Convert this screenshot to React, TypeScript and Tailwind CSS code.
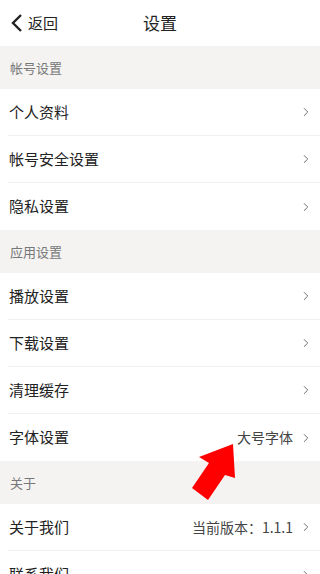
import { ChevronRight } from "lucide-react";

type Row = { label: string; value?: string };
type Group = { title: string; rows: Row[] };

const groups: Group[] = [
  {
    title: "帐号设置",
    rows: [{ label: "个人资料" }, { label: "帐号安全设置" }, { label: "隐私设置" }],
  },
  {
    title: "应用设置",
    rows: [
      { label: "播放设置" },
      { label: "下载设置" },
      { label: "清理缓存" },
      { label: "字体设置", value: "大号字体" },
    ],
  },
  {
    title: "关于",
    rows: [{ label: "关于我们", value: "当前版本：1.1.1" }, { label: "联系我们" }],
  },
];

export default function App() {
  return (
    <div
      className="relative h-[574px] w-[320px] overflow-hidden bg-white"
      style={{ fontFamily: '"Noto Sans CJK SC", "Noto Sans", sans-serif' }}
    >
      {/* 顶部导航 */}
      <div className="relative flex h-[46px] items-center justify-center bg-white">
        <div className="absolute left-[10px] top-0 flex h-full items-center text-[#222]">
          <svg width="14" height="20" viewBox="0 0 14 20" className="mr-[4px]">
            <path d="M11 2 L3 10 L11 18" fill="none" stroke="#222" strokeWidth="2.4" />
          </svg>
          <span className="text-[15px]">返回</span>
        </div>
        <span className="text-[17px] text-[#222]">设置</span>
      </div>

      {groups.map((g) => (
        <div key={g.title}>
          <div className="flex h-[43px] items-center bg-[#f4f3f2] pl-[10px] text-[13px] text-[#777]">
            {g.title}
          </div>
          {g.rows.map((r, i) => (
            <div key={r.label} className="pl-[8px]">
              <div
                className={
                  "flex h-[47px] items-center justify-between pl-[1px] pr-[7px] " +
                  (i < g.rows.length - 1 ? "border-b border-[#f0f0f0]" : "")
                }
              >
                <span className="text-[15px] text-[#222]">{r.label}</span>
                <div className="flex items-center">
                  {r.value && <span className="mr-[6px] text-[14px] text-[#444]">{r.value}</span>}
                  <ChevronRight className="h-[14px] w-[14px] text-[#666]" strokeWidth={1.6} />
                </div>
              </div>
            </div>
          ))}
        </div>
      ))}

      {/* 红色箭头 */}
      <svg className="pointer-events-none absolute left-0 top-0" width="320" height="574">
        <polygon
          points="233,444 199,457 209,463 192,488 208,500 225,475 235,478"
          fill="#ff0000"
        />
      </svg>
    </div>
  );
}
